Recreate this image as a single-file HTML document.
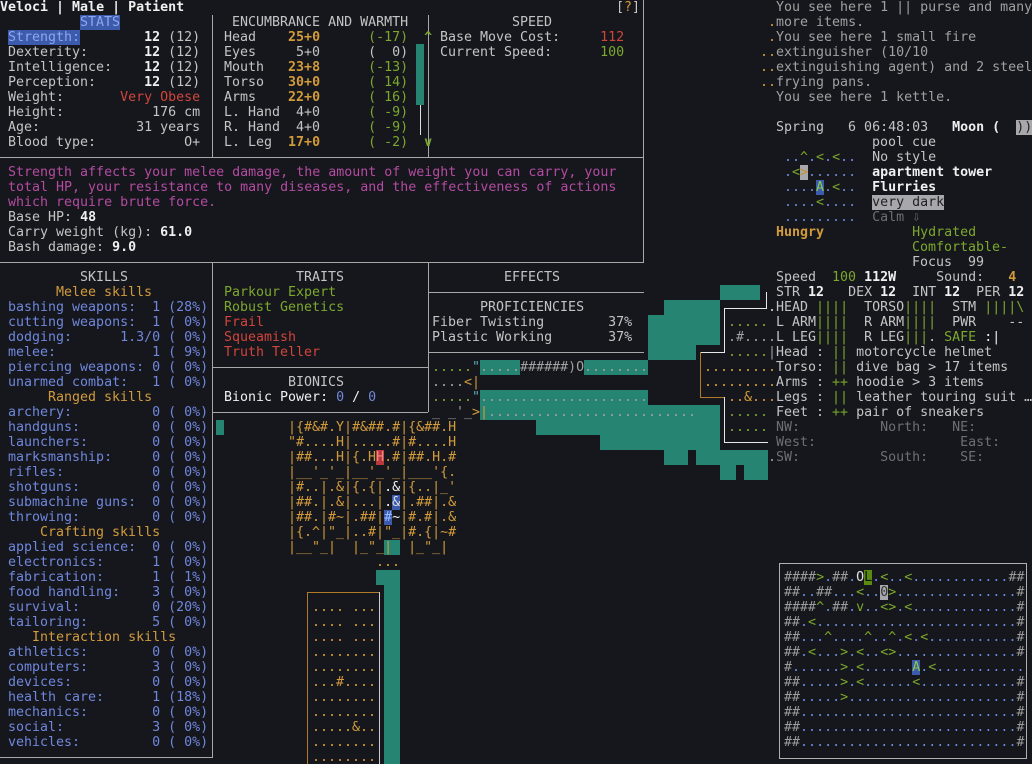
<!DOCTYPE html>
<html><head><meta charset="utf-8">
<style>
html,body{margin:0;padding:0;background:#16171d;width:1032px;height:764px;overflow:hidden}
body{position:relative;font-family:"DejaVu Sans Mono","Liberation Mono",monospace;font-size:13.3px;line-height:15px;color:#c4c4c4}
.t{position:absolute;white-space:pre;height:15px}
.b{font-weight:bold;color:#f0f0f0}
.w{color:#f0f0f0}
.g{color:#7ca82c}
.y{color:#d29b3a}
.r{color:#d0453a}
.m{color:#b34ba1}
.u{color:#6f87dc}
.d{color:#6e6e72}
.mg{color:#a0a0a0}
.h{position:absolute;background:#a8a8a8;height:1px}
.v{position:absolute;background:#a8a8a8;width:1px}
.gh{position:absolute;background:#b07a28;height:1px}
.gv{position:absolute;background:#b07a28;width:1px}
.wh{position:absolute;background:#e8e8e8;height:1px}
.wv{position:absolute;background:#e8e8e8;width:1px}
.tl{position:absolute;background:#268473}
.hl{background:#3c5bad;color:#8ea6ec}
</style></head><body>

<!-- teal map areas -->
<div class="tl" style="left:720px;top:285px;width:40px;height:15px"></div>
<div class="tl" style="left:664px;top:300px;width:56px;height:15px"></div>
<div class="tl" style="left:648px;top:315px;width:72px;height:30px"></div>
<div class="tl" style="left:648px;top:345px;width:48px;height:15px"></div>
<div class="tl" style="left:640px;top:360px;width:8px;height:15px"></div>
<div class="tl" style="left:480px;top:360px;width:40px;height:15px"></div>
<div class="tl" style="left:584px;top:360px;width:64px;height:15px"></div>
<div class="tl" style="left:480px;top:390px;width:168px;height:15px"></div>
<div class="tl" style="left:640px;top:390px;width:8px;height:15px"></div>
<div class="tl" style="left:480px;top:405px;width:240px;height:15px"></div>
<div class="tl" style="left:536px;top:420px;width:184px;height:15px"></div>
<div class="tl" style="left:600px;top:435px;width:120px;height:15px"></div>
<div class="tl" style="left:664px;top:450px;width:24px;height:15px"></div>
<div class="tl" style="left:696px;top:450px;width:72px;height:15px"></div>
<div class="tl" style="left:720px;top:465px;width:16px;height:15px"></div>
<div class="tl" style="left:744px;top:465px;width:24px;height:15px"></div>
<div class="tl" style="left:216px;top:420px;width:8px;height:15px"></div>
<div class="tl" style="left:384px;top:540px;width:16px;height:15px"></div>
<div class="tl" style="left:376px;top:570px;width:24px;height:15px"></div>
<div class="tl" style="left:384px;top:585px;width:16px;height:179px"></div>

<!-- panel borders -->
<div class="v" style="left:212px;top:15px;height:143px"></div>
<div class="v" style="left:428px;top:15px;height:143px"></div>
<div class="v" style="left:643px;top:0px;height:263px"></div>
<div class="h" style="left:0;top:157px;width:644px"></div>
<div class="h" style="left:0;top:262px;width:644px"></div>
<div class="v" style="left:212px;top:262px;height:496px"></div>
<div class="h" style="left:0;top:757px;width:213px"></div>
<div class="v" style="left:428px;top:262px;height:150px"></div>
<div class="h" style="left:212px;top:367px;width:216px"></div>
<div class="h" style="left:212px;top:412px;width:216px"></div>
<div class="h" style="left:428px;top:292px;width:216px"></div>
<div class="h" style="left:428px;top:352px;width:216px"></div>

<!-- top bar -->
<div class="t b" style="top:0;left:0">Veloci | Male | Patient</div>
<div class="t" style="top:0;left:616px">[<span class="y">?</span>]</div>

<!-- stats -->
<div class="t" style="top:15px;left:80px"><span class="hl">STATS</span></div>
<div class="t" style="top:30px;left:8px"><span class="hl">Strength:</span>        <span class="b">12</span> (12)</div>
<div class="t" style="top:45px;left:8px">Dexterity:       <span class="b">12</span> (12)</div>
<div class="t" style="top:60px;left:8px">Intelligence:    <span class="b">12</span> (12)</div>
<div class="t" style="top:75px;left:8px">Perception:      <span class="b">12</span> (12)</div>
<div class="t" style="top:90px;left:8px">Weight:       <span class="r">Very Obese</span></div>
<div class="t" style="top:105px;left:8px">Height:           176 cm</div>
<div class="t" style="top:120px;left:8px">Age:            31 years</div>
<div class="t" style="top:135px;left:8px">Blood type:           O+</div>

<!-- encumbrance -->
<div class="t" style="top:15px;left:232px">ENCUMBRANCE AND WARMTH</div>
<div class="t" style="top:30px;left:224px">Head    <span class="y b">25+0</span>      <span class="g">(-17)</span>  <span class="g b">^</span></div>
<div class="t" style="top:45px;left:224px">Eyes     5+0      (  0)</div>
<div class="t" style="top:60px;left:224px">Mouth   <span class="y b">23+8</span>      <span class="g">(-13)</span></div>
<div class="t" style="top:75px;left:224px">Torso   <span class="y b">30+0</span>      <span class="g">( 14)</span></div>
<div class="t" style="top:90px;left:224px">Arms    <span class="y b">22+0</span>      <span class="g">( 16)</span></div>
<div class="t" style="top:105px;left:224px">L. Hand  4+0      <span class="g">( -9)</span></div>
<div class="t" style="top:120px;left:224px">R. Hand  4+0      <span class="g">( -9)</span></div>
<div class="t" style="top:135px;left:224px">L. Leg  <span class="y b">17+0</span>      <span class="g">( -2)</span>  <span class="g b">v</span></div>
<div class="tl" style="left:416px;top:44px;width:8px;height:61px"></div>
<div class="v" style="left:420px;top:105px;height:30px;background:#ddd"></div>

<!-- speed -->
<div class="t" style="top:15px;left:512px">SPEED</div>
<div class="t" style="top:30px;left:440px">Base Move Cost:     <span class="r">112</span></div>
<div class="t" style="top:45px;left:440px">Current Speed:      <span class="g">100</span></div>

<!-- description -->
<div class="t m" style="top:165px;left:8px">Strength affects your melee damage, the amount of weight you can carry, your</div>
<div class="t m" style="top:180px;left:8px">total HP, your resistance to many diseases, and the effectiveness of actions</div>
<div class="t m" style="top:195px;left:8px">which require brute force.</div>
<div class="t" style="top:210px;left:8px">Base HP: <span class="b">48</span></div>
<div class="t" style="top:225px;left:8px">Carry weight (kg): <span class="b">61.0</span></div>
<div class="t" style="top:240px;left:8px">Bash damage: <span class="b">9.0</span></div>

<!-- skills -->
<div class="t" style="top:270px;left:80px">SKILLS</div>
<div class="t y" style="top:285px;left:56px">Melee skills</div>
<div class="t u" style="top:300px;left:8px">bashing weapons:  1 (28%)
cutting weapons:  1 ( 0%)
dodging:      1.3/0 ( 0%)
melee:            1 ( 9%)
piercing weapons: 0 ( 0%)
unarmed combat:   1 ( 0%)</div>
<div class="t y" style="top:390px;left:48px">Ranged skills</div>
<div class="t u" style="top:405px;left:8px">archery:          0 ( 0%)
handguns:         0 ( 0%)
launchers:        0 ( 0%)
marksmanship:     0 ( 0%)
rifles:           0 ( 0%)
shotguns:         0 ( 0%)
submachine guns:  0 ( 0%)
throwing:         0 ( 0%)</div>
<div class="t y" style="top:525px;left:40px">Crafting skills</div>
<div class="t u" style="top:540px;left:8px">applied science:  0 ( 0%)
electronics:      1 ( 0%)
fabrication:      1 ( 1%)
food handling:    3 ( 0%)
survival:         0 (20%)
tailoring:        5 ( 0%)</div>
<div class="t y" style="top:630px;left:32px">Interaction skills</div>
<div class="t u" style="top:645px;left:8px">athletics:        0 ( 0%)
computers:        3 ( 0%)
devices:          0 ( 0%)
health care:      1 (18%)
mechanics:        0 ( 0%)
social:           3 ( 0%)
vehicles:         0 ( 0%)</div>

<!-- traits -->
<div class="t" style="top:270px;left:296px">TRAITS</div>
<div class="t g" style="top:285px;left:224px">Parkour Expert</div>
<div class="t g" style="top:300px;left:224px">Robust Genetics</div>
<div class="t r" style="top:315px;left:224px">Frail</div>
<div class="t r" style="top:330px;left:224px">Squeamish</div>
<div class="t r" style="top:345px;left:224px">Truth Teller</div>
<div class="t" style="top:375px;left:288px">BIONICS</div>
<div class="t" style="top:390px;left:224px"><span class="w">Bionic Power: </span><span class="u">0</span><span class="w"> / </span><span class="u">0</span></div>

<div class="t" style="top:270px;left:504px">EFFECTS</div>
<div class="t" style="top:300px;left:480px">PROFICIENCIES</div>
<div class="t" style="top:315px;left:432px">Fiber Twisting        37%</div>
<div class="t" style="top:330px;left:432px">Plastic Working       37%</div>

<!-- map bits -->
<div class="t" style="top:360px;left:432px"><span class="g">.....</span><span style="color:#5ab">"</span><span class="mg">.....######)O........</span></div>
<div class="t" style="top:375px;left:432px"><span class="mg">....</span><span class="y">&lt;|</span></div>
<div class="t" style="top:390px;left:432px"><span class="g">.....</span><span style="color:#5ab">"</span><span class="mg">.....................</span></div>
<div class="t" style="top:405px;left:432px"><span class="mg">_ _'_</span><span class="y">&gt;|</span><span class="mg">..........................</span></div>
<div class="t y" style="top:420px;left:288px">|{#&amp;#.Y|#&amp;##.#|{&amp;##.H</div>
<div class="t y" style="top:435px;left:288px">"#....H|.....#|#....H</div>
<div class="t y" style="top:450px;left:288px">|##...H|{.H<span style="background:#b83a3a;color:#e88">H</span>.#|##.H.#</div>
<div class="t y" style="top:465px;left:288px">|__'_'_|__'_'_|___'{.</div>
<div class="t y" style="top:480px;left:288px">|#..|.&amp;|{.{|<span class="w">.&amp;</span>|{..|_'</div>
<div class="t y" style="top:495px;left:288px">|##.|.&amp;|...|<span class="w">.</span><span style="background:#3c5bad;color:#ddd">&amp;</span>|.##|.&amp;</div>
<div class="t y" style="top:510px;left:288px">|##.|#~|.##|<span style="background:#3c5bad;color:#9bf">#</span><span class="w">~</span>|#.#|.&amp;</div>
<div class="t y" style="top:525px;left:288px">|{.^|"_|..#|"_|#.{|~#</div>
<div class="t y" style="top:540px;left:288px">|__"_|  |_"_|  |_"_|</div>
<div class="t y" style="top:555px;left:376px">...</div>
<div class="gh" style="left:307px;top:592px;width:72px"></div>
<div class="gv" style="left:307px;top:592px;height:172px"></div>
<div class="wv" style="left:379px;top:592px;height:172px;background:#ccc"></div>
<div class="t y" style="top:600px;left:312px">.... ...
.... ...
.... ...
........
........
...#....
........
........
.....&amp;..
........
........</div>

<!-- white/gold wall lines near HUD -->
<div class="wv" style="left:766px;top:292px;height:16px"></div>
<div class="wh" style="left:724px;top:308px;width:43px"></div>
<div class="wv" style="left:724px;top:308px;height:44px"></div>
<div class="wh" style="left:700px;top:352px;width:25px"></div>
<div class="gv" style="left:700px;top:352px;height:45px"></div>
<div class="gh" style="left:700px;top:397px;width:25px"></div>
<div class="wv" style="left:724px;top:397px;height:45px"></div>
<div class="wh" style="left:724px;top:442px;width:44px"></div>
<div class="t" style="top:300px;left:768px" ><span class="mg">.</span></div>
<div class="t" style="top:315px;left:728px"><span class="g">.....</span></div>
<div class="t" style="top:330px;left:728px"><span class="mg">.#....</span></div>
<div class="t" style="top:345px;left:728px"><span class="g">.....</span><span class="mg">|</span></div>
<div class="t y" style="top:360px;left:704px">.........</div>
<div class="t y" style="top:375px;left:704px">.........</div>
<div class="t y" style="top:390px;left:728px">..&amp;...</div>
<div class="t g" style="top:405px;left:728px">.....</div>
<div class="t g" style="top:420px;left:728px">.....</div>
<div class="t mg" style="top:450px;left:768px">.</div>

<!-- right HUD messages -->
<div class="t mg" style="top:0;left:776px">You see here 1 || purse and many</div>
<div class="t mg" style="top:15px;left:768px"><span class="y">.</span>more items.</div>
<div class="t mg" style="top:30px;left:768px"><span class="y">.</span>You see here 1 small fire</div>
<div class="t mg" style="top:45px;left:760px"><span class="y">..</span>extinguisher (10/10</div>
<div class="t mg" style="top:60px;left:760px"><span class="y">..</span>extinguishing agent) and 2 steel</div>
<div class="t mg" style="top:75px;left:760px"><span class="y">..</span>frying pans.</div>
<div class="t mg" style="top:90px;left:776px">You see here 1 kettle.</div>
<div class="t" style="top:120px;left:776px">Spring   6 06:48:03   <span class="b">Moon (</span>  <span style="background:#a8a8ac;color:#222">))</span></div>
<div class="t" style="top:135px;left:872px">pool cue</div>
<div class="t" style="top:150px;left:784px"><span class="u">..</span><span class="g">^</span><span class="u">.</span><span class="g">&lt;</span><span class="u">.</span><span class="g">&lt;</span><span class="u">..</span>  No style</div>
<div class="t" style="top:165px;left:784px"><span class="u">.</span><span class="g">&lt;</span><span style="background:#a8a8ac;color:#c8902c">&gt;</span><span class="u">......</span>  <span class="b">apartment tower</span></div>
<div class="t" style="top:180px;left:784px"><span class="u">....</span><span style="background:#3c5bad;color:#8c4">A</span><span class="u">.</span><span class="g">&lt;</span><span class="u">..</span>  <span class="b">Flurries</span></div>
<div class="t" style="top:195px;left:784px"><span class="u">....</span><span class="g">&lt;</span><span class="u">....</span>  <span style="background:#a8a8ac;color:#222">very dark</span></div>
<div class="t" style="top:210px;left:784px"><span class="u">.........</span>  <span class="d">Calm ⇩</span></div>
<div class="t" style="top:225px;left:776px"><span class="y b">Hungry</span>           <span class="g">Hydrated</span></div>
<div class="t g" style="top:240px;left:912px">Comfortable-</div>
<div class="t" style="top:255px;left:912px">Focus  99</div>
<div class="t" style="top:270px;left:776px">Speed  <span class="g">100</span> <span class="b">112W</span>     Sound:   <span class="y b">4</span></div>
<div class="t" style="top:285px;left:776px">STR <span class="b">12</span>   DEX <span class="b">12</span>  INT <span class="b">12</span>  PER <span class="b">12</span></div>
<div class="t" style="top:300px;left:768px">.HEAD <span class="g">||||</span>  TORSO<span class="g">||||</span>  STM <span class="g">||||\</span></div>
<div class="t" style="top:315px;left:776px">L ARM<span class="g">||||</span>  R ARM<span class="g">||||</span>  PWR    --</div>
<div class="t" style="top:330px;left:776px">L LEG<span class="g">||||</span>  R LEG<span class="g">|||</span>. <span class="g">SAFE</span> <span class="w">:|</span></div>
<div class="t" style="top:345px;left:776px">Head : <span class="g">||</span> motorcycle helmet</div>
<div class="t" style="top:360px;left:776px">Torso: <span class="g">||</span> dive bag &gt; 17 items</div>
<div class="t" style="top:375px;left:776px">Arms : <span class="g">++</span> hoodie &gt; 3 items</div>
<div class="t" style="top:390px;left:776px">Legs : <span class="g">||</span> leather touring suit …</div>
<div class="t" style="top:405px;left:776px">Feet : <span class="g">++</span> pair of sneakers</div>
<div class="t d" style="top:420px;left:776px">NW:          North:   NE:</div>
<div class="t d" style="top:435px;left:776px">West:                  East:</div>
<div class="t d" style="top:450px;left:776px">SW:          South:    SE:</div>

<!-- minimap -->
<div style="position:absolute;left:779px;top:563px;width:248px;height:196px;border:1px solid #b0b0b0;box-sizing:border-box"></div>
<div id="mm" class="t" style="top:570px;left:784px;height:180px">####&gt;.##.OL.&lt;..&lt;............##
##..##...&lt;..0&gt;...............#
####^.##.v..&lt;&gt;.&lt;.............#
##.&lt;.........................#
##...^....^..^.&lt;.&lt;...........#
##.&lt;...&gt;.&lt;..&lt;&gt;...............#
#......&gt;.&lt;......A.&lt;...........
##.....&gt;.&lt;......&lt;............#
##.....&gt;.....................#
##...........................#
##...........................#
##...........................#</div>
<script>
(function(){var e=document.getElementById('mm');var s=e.textContent;var o='';
for(var i=0;i<s.length;i++){var c=s[i];
if(c=='\n'){o+=c;continue}
var col='#6a8ae0';var extra='';
if(c=='#')col='#9a9a9a';else if('<>^v'.indexOf(c)>=0)col='#7ca82c';
else if(c=='O')col='#e0e0e0';else if(c=='L'){col='#111';extra='background:#5a8a10;';}
else if(c=='0'){col='#333';extra='background:#a8a8ac;';}
else if(c=='A'){col='#8c4';extra='background:#3c5bad;';}
var t=c=='<'?'&lt;':c=='>'?'&gt;':c;
o+='<span style="color:'+col+';'+extra+'">'+t+'</span>';}
e.innerHTML=o;})();
</script>
</body></html>
